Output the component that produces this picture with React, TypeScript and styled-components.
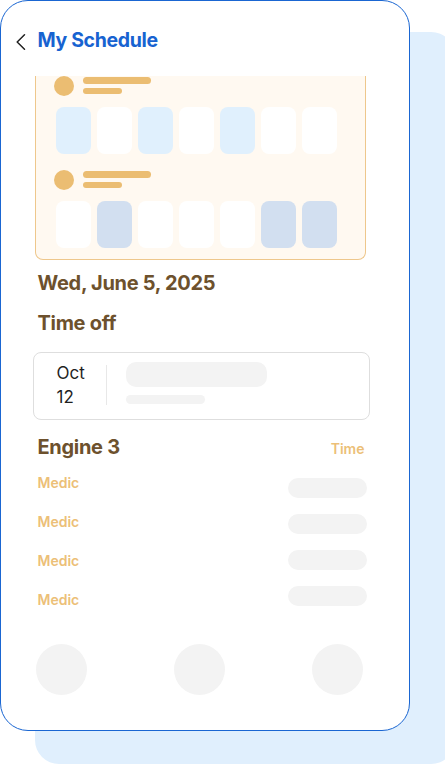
import React from 'react';
import styled, { createGlobalStyle } from 'styled-components';

const GlobalStyle = createGlobalStyle`
  html, body {
    margin: 0;
    padding: 0;
    background: #ffffff;
  }
  body {
    font-family: Inter, "Noto Sans", "DejaVu Sans", sans-serif;
  }
`;

const Stage = styled.div`
  position: relative;
  width: 445px;
  height: 764px;
  overflow: hidden;
`;

/* pale card peeking out behind the phone */
const Backdrop = styled.div`
  position: absolute;
  left: 35px;
  top: 32px;
  width: 420px;
  height: 732px;
  background: #e0effd;
  border-radius: 24px;
`;

const Frame = styled.div`
  position: relative;
  box-sizing: border-box;
  width: 410px;
  height: 731px;
  background: #ffffff;
  border: 1.5px solid #1a66d2;
  border-radius: 28px;
  overflow: hidden;
`;

const Header = styled.div`
  display: flex;
  align-items: center;
  gap: 11.5px;
  box-sizing: border-box;
  height: 74.5px;
  padding: 4px 0 0 15px;
`;

const BackIcon = styled.svg`
  width: 10px;
  height: 16px;
  margin-top: 3px;
`;

const Title = styled.h1`
  margin: 0;
  font-size: 19.5px;
  line-height: 24px;
  font-weight: 700;
  color: #1763d1;
  letter-spacing: -0.35px;
`;

const Body = styled.div`
  padding-left: 33.5px;
`;

const CalendarCard = styled.div`
  box-sizing: border-box;
  width: 331px;
  padding: 0 20px 11px;
  background: #fff9f1;
  border: 1px solid #eec78c;
  border-top: none;
  border-radius: 0 0 8px 8px;
  display: flex;
  flex-direction: column;
  gap: 16px;
`;

const Group = styled.div`
  display: flex;
  flex-direction: column;
  gap: 11px;
`;

const GroupHead = styled.div`
  display: flex;
  align-items: center;
  gap: 9px;
  margin-left: -2px;
`;

const Avatar = styled.div`
  width: 20px;
  height: 20px;
  border-radius: 50%;
  background: #ebbd72;
`;

const Lines = styled.div`
  display: flex;
  flex-direction: column;
  gap: 4px;
`;

const Line = styled.div<{ $w: number }>`
  width: ${(p) => p.$w}px;
  height: 6.5px;
  border-radius: 4px;
  background: #ebbd72;
`;

const Days = styled.div`
  display: flex;
  gap: 6px;
`;

const Day = styled.div<{ $tone: 'white' | 'light' | 'dark' }>`
  width: 35px;
  height: 47px;
  border-radius: 8px;
  background: ${(p) =>
    p.$tone === 'light' ? '#e0f0fd' : p.$tone === 'dark' ? '#d2dff0' : '#ffffff'};
`;

const Heading = styled.h2<{ $top: number }>`
  margin: ${(p) => p.$top}px 0 0 3px;
  font-size: 20px;
  line-height: 24px;
  font-weight: 700;
  color: #6d512d;
  letter-spacing: -0.3px;
`;

const TimeOffCard = styled.div`
  box-sizing: border-box;
  width: 337px;
  height: 68px;
  margin: 17px 0 0 -2px;
  padding: 0 0 2px 23px;
  border: 1px solid #dedede;
  border-radius: 8px;
  display: flex;
  align-items: center;
`;

const DateText = styled.div`
  width: 27px;
  font-size: 17px;
  line-height: 24px;
  color: #1f1f1f;
`;

const Divider = styled.div`
  width: 1px;
  height: 40px;
  margin: 0 19px 0 22.5px;
  background: #e8e8e8;
`;

const Bars = styled.div`
  display: flex;
  flex-direction: column;
  gap: 8px;
  margin-top: -4px;
`;

const Bar = styled.div<{ $w: number; $h: number }>`
  width: ${(p) => p.$w}px;
  height: ${(p) => p.$h}px;
  border-radius: ${(p) => Math.min(10, p.$h / 2)}px;
  background: #f3f3f3;
`;

const CrewHead = styled.div`
  display: flex;
  justify-content: space-between;
  align-items: baseline;
  width: 327px;
  margin: 14.5px 0 0 3px;
`;

const CrewTitle = styled.h2`
  margin: 0;
  font-size: 20px;
  line-height: 24px;
  font-weight: 700;
  color: #6d512d;
  letter-spacing: -0.3px;
`;

const SmallLabel = styled.span`
  font-size: 14px;
  line-height: 17px;
  font-weight: 600;
  color: #ecbf78;
`;

const Crew = styled.div`
  display: flex;
  justify-content: space-between;
  width: 329px;
  margin: 15px 0 0 3px;
`;

const Column = styled.div<{ $gap: number; $top: number }>`
  display: flex;
  flex-direction: column;
  gap: ${(p) => p.$gap}px;
  margin-top: ${(p) => p.$top}px;
`;

const Pill = styled.div`
  width: 79px;
  height: 20px;
  border-radius: 10px;
  background: #f3f3f3;
`;

const Dock = styled.div`
  display: flex;
  justify-content: space-between;
  width: 327px;
  margin: 36px 0 0 1px;
`;

const DockButton = styled.div`
  width: 51px;
  height: 51px;
  border-radius: 50%;
  background: #f3f3f3;
`;

type Tone = 'white' | 'light' | 'dark';

const weeks: Tone[][] = [
  ['light', 'white', 'light', 'white', 'light', 'white', 'white'],
  ['white', 'dark', 'white', 'white', 'white', 'dark', 'dark'],
];

const App = () => {
  return (
    <>
      <GlobalStyle />
      <Stage>
        <Backdrop />
        <Frame>
          <Header>
            <BackIcon viewBox="0 0 10 16" fill="none">
              <polyline
                points="8.5,0.8 1.2,8 8.5,15.2"
                stroke="#222"
                strokeWidth="1.5"
                strokeLinecap="round"
                strokeLinejoin="round"
              />
            </BackIcon>
            <Title>My Schedule</Title>
          </Header>

          <Body>
            <CalendarCard>
              {weeks.map((week, i) => (
                <Group key={i}>
                  <GroupHead>
                    <Avatar />
                    <Lines>
                      <Line $w={68} />
                      <Line $w={39} />
                    </Lines>
                  </GroupHead>
                  <Days>
                    {week.map((tone, j) => (
                      <Day key={j} $tone={tone} />
                    ))}
                  </Days>
                </Group>
              ))}
            </CalendarCard>

            <Heading $top={11}>Wed, June 5, 2025</Heading>
            <Heading $top={16.7}>Time off</Heading>

            <TimeOffCard>
              <DateText>
                Oct
                <br />
                12
              </DateText>
              <Divider />
              <Bars>
                <Bar $w={141} $h={25} />
                <Bar $w={79} $h={9} />
              </Bars>
            </TimeOffCard>

            <CrewHead>
              <CrewTitle>Engine 3</CrewTitle>
              <SmallLabel>Time</SmallLabel>
            </CrewHead>

            <Crew>
              <Column $gap={22} $top={0}>
                {[0, 1, 2, 3].map((i) => (
                  <SmallLabel key={i}>Medic</SmallLabel>
                ))}
              </Column>
              <Column $gap={16} $top={4.5}>
                {[0, 1, 2, 3].map((i) => (
                  <Pill key={i} />
                ))}
              </Column>
            </Crew>

            <Dock>
              <DockButton />
              <DockButton />
              <DockButton />
            </Dock>
          </Body>
        </Frame>
      </Stage>
    </>
  );
};

export default App;
